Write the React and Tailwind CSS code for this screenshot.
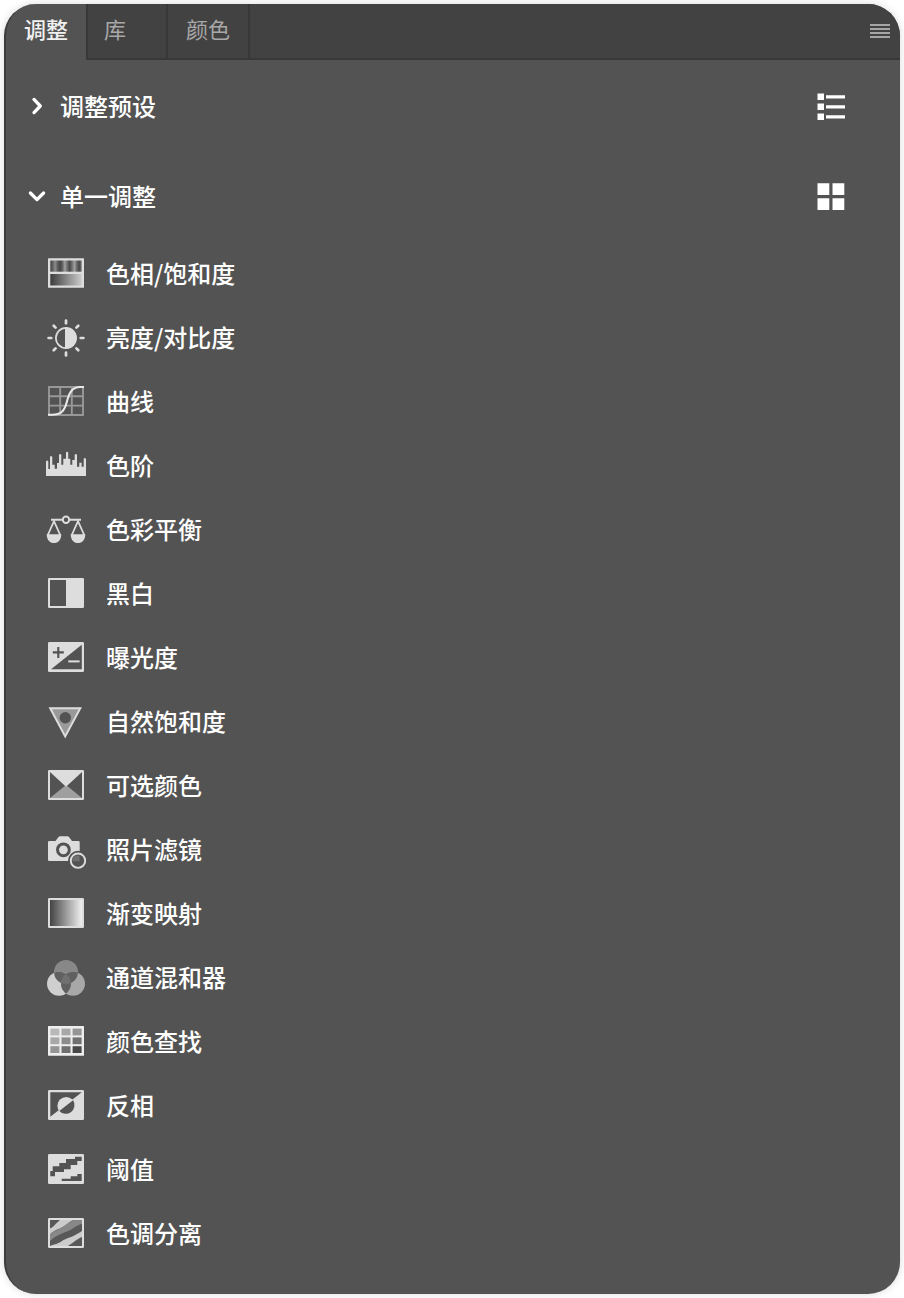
import React from "react";

const L = "#dddddd";
const D = "#535353";

function Icon({ children }) {
  return (
    <svg className="h-10 w-10 shrink-0" viewBox="0 0 40 40" fill="none">
      {children}
    </svg>
  );
}

function Frame({ fill = "none", stroke = L }) {
  return <rect x="3" y="6" width="34" height="28" rx="0.3" fill={fill} stroke={stroke} strokeWidth="2" />;
}

const hueTop = ["#454545", "#606060", "#8c8c8c", "#606060", "#454545", "#606060", "#a0a0a0", "#707070", "#484848", "#707070", "#a0a0a0", "#686868", "#484848", "#787878"];

const Hue = () => (
  <Icon>
    <defs>
      <linearGradient id="hueTop">
        {hueTop.map((c, i) => (
          <stop key={i} offset={i / (hueTop.length - 1)} stopColor={c} />
        ))}
      </linearGradient>
      <linearGradient id="hueBottom">
        <stop offset="0" stopColor="#3c3c3c" />
        <stop offset="1" stopColor="#cccccc" />
      </linearGradient>
    </defs>
    <rect x="2" y="5.2" width="36" height="29.6" rx="0.5" fill={L} />
    <rect x="4.3" y="7.5" width="31.4" height="11.2" fill="url(#hueTop)" />
    <rect x="4.3" y="21" width="31.4" height="11.5" fill="url(#hueBottom)" />
  </Icon>
);

const Brightness = () => (
  <Icon>
    <circle cx="20" cy="21" r="10.1" stroke={L} strokeWidth="1.7" />
    <path d="M19 10.5H20a10.5 10.5 0 0 1 0 21H19Z" fill={L} />
    {[0, 45, 90, 135, 180, 225, 270, 315].map((a) => (
      <path key={a} d="M20 3.6v2.7" stroke={L} strokeWidth="2.7" strokeLinecap="round" transform={`rotate(${a} 20 21)`} />
    ))}
  </Icon>
);

const Curves = () => (
  <Icon>
    <path d="M3 6H37V34H3ZM14.2 6V34M25.8 6V34M3 15.3H37M3 24.6H37" stroke="#989898" strokeWidth="1.9" />
    <path d="M2 33.7H6C15 33.7 18.5 30 20.8 21S26 6 34 6H38" stroke="#e8e8e8" strokeWidth="2.1" />
  </Icon>
);

const Levels = () => (
  <Icon>
    <path
      fill={L}
      d="M0 31V16.5Q1.1 14.5 2.3 16.5V24H4V12Q5.1 10 6.3 12V19.7H8.7V23.7H11V18H13V9.8Q14.1 8 15.3 9.8V19.7H17.3V13.7H20V7.6Q21.1 5.8 22.2 7.6V13.7H24.3V19.7H26.3V15H28.7V9.8Q29.8 8 31 9.8V21.7H33.3V17.7H35.6V21.7H37.7V13.8Q38.8 12 40 13.8V31Z"
    />
  </Icon>
);

const Balance = () => (
  <Icon>
    <path d="M5 10.8H16.5M23.5 10.8H35" stroke={L} strokeWidth="2" />
    <circle cx="20" cy="10.8" r="3.2" stroke={L} strokeWidth="2" />
    <path d="M1.8 26L8 12.2L14.2 26M25.8 26L32 12.2L38.2 26" stroke={L} strokeWidth="1.8" />
    <path d="M0.7 25.2H15.3C15.3 31 12.2 34 8 34S0.7 31 0.7 25.2ZM24.7 25.2H39.3C39.3 31 36.2 34 32 34S24.7 31 24.7 25.2Z" fill={L} />
  </Icon>
);

const BlackWhite = () => (
  <Icon>
    <Frame />
    <rect x="20" y="6" width="17" height="28" fill={L} />
  </Icon>
);

const Exposure = () => (
  <Icon>
    <Frame fill={L} />
    <path d="M5 32.2H35.8V7.7Z" fill={D} />
    <path d="M6.8 15.4H17.8M12.3 9.9V20.9" stroke={D} strokeWidth="2.1" />
    <path d="M22.3 24.4H33.6" stroke={L} strokeWidth="2" />
  </Icon>
);

const Vibrance = () => (
  <Icon>
    <path d="M4.2 7.3H34.3L19.2 35.4Z" fill="#999999" stroke={L} strokeWidth="2" />
    <circle cx="19.3" cy="16.8" r="5.7" fill={D} />
  </Icon>
);

const Selective = () => (
  <Icon>
    <path d="M4 33L20 20L36 33Z" fill="#9f9f9f" />
    <path d="M4 7H36L20 21.7Z" fill={L} />
    <Frame />
  </Icon>
);

const PhotoFilter = () => (
  <Icon>
    <path d="M3.2 12H9.5L12.3 8.2Q13 7.3 14 7.3H21.5Q22.5 7.3 23.2 8.2L26 12H32.5Q33.7 12 33.7 13.2V32H3.2Q2 32 2 30.8V13.2Q2 12 3.2 12Z" fill={L} />
    <circle cx="17.4" cy="20.8" r="7.4" fill={D} />
    <circle cx="17.4" cy="20.8" r="4.4" fill={L} />
    <circle cx="32" cy="31.7" r="10" fill={D} />
    <circle cx="32" cy="31.7" r="7.2" stroke={L} strokeWidth="1.9" />
    <path d="M26.5 30.7Q27.5 26.4 32 26.4H33.6V32.2H26.5Z" fill="#707070" />
  </Icon>
);

const GradientMap = () => (
  <Icon>
    <defs>
      <linearGradient id="mapFill">
        <stop offset="0" stopColor="#444444" />
        <stop offset="1" stopColor="#f0f0f0" />
      </linearGradient>
    </defs>
    <rect x="4" y="7" width="32" height="26" fill="url(#mapFill)" />
    <Frame />
  </Icon>
);

const ChannelMixer = () => (
  <Icon>
    <defs>
      <clipPath id="mixTop"><circle cx="20" cy="15" r="12" /></clipPath>
      <clipPath id="mixLeft"><circle cx="13" cy="26.8" r="12" /></clipPath>
    </defs>
    <circle cx="20" cy="15" r="12" fill="#888888" />
    <circle cx="13" cy="26.8" r="12" fill="#cfcfcf" />
    <circle cx="27" cy="26.8" r="12" fill="#a8a8a8" />
    <g clipPath="url(#mixTop)">
      <circle cx="13" cy="26.8" r="12" fill="#606060" />
      <circle cx="27" cy="26.8" r="12" fill="#606060" />
    </g>
    <g clipPath="url(#mixLeft)">
      <circle cx="27" cy="26.8" r="12" fill="#606060" />
      <g clipPath="url(#mixTop)">
        <circle cx="27" cy="26.8" r="12" fill="#707070" />
      </g>
    </g>
  </Icon>
);

const swatches = ["#b8b8b8", "#a8a8a8", "#959595", "#a8a8a8", "#8c8c8c", "#707070", "#959595", "#707070", "#484848"];

const Lookup = () => (
  <Icon>
    <rect x="2" y="5" width="36" height="29.7" rx="0.5" fill="#eeeeee" />
    {swatches.map((c, i) => (
      <rect key={i} x={4.4 + (i % 3) * 11.1} y={7.6 + Math.floor(i / 3) * 8.8} width="9" height="6.8" fill={c} />
    ))}
  </Icon>
);

const Invert = () => (
  <Icon>
    <Frame fill={L} />
    <path d="M4.3 7.2H35.8L4.3 31.8Z" fill={D} />
    <circle cx="20.2" cy="20.7" r="8.8" fill={L} />
    <path d="M13.3 26.1L27.1 15.3A8.8 8.8 0 0 1 13.3 26.1Z" fill={D} />
  </Icon>
);

const Threshold = () => (
  <Icon>
    <Frame fill={L} />
    <path
      fill={D}
      d="M4.3 22H6.7V17.3H13.3V14H20V10H29V7.7H35.7V12H31.3V16H24.7V20.3H18V23H9V27.3H4.3ZM15.7 29.7H24.7V27.3H31.3V25H35.7V32H15.7Z"
    />
  </Icon>
);

const Posterize = () => (
  <Icon>
    <rect x="3" y="6" width="34" height="28" fill="#585858" />
    <path d="M4 15.5C8 14 10 10 14 7H28C23 8 20 13 15 15S7 18 4 21.5Z" fill="#cccccc" />
    <path d="M4 21.5C7 18 11 17.5 15 15S23 9 28 7H36V11C30 12 26 17 21 18.5S9 23 4 28Z" fill="#888888" />
    <path d="M4 33C9 31 12 31 16 28S26 25 36 18V24C31 26 28 29 22 33Z" fill="#cccccc" />
    <Frame />
  </Icon>
);

const adjustments = [
  ["色相/饱和度", Hue],
  ["亮度/对比度", Brightness],
  ["曲线", Curves],
  ["色阶", Levels],
  ["色彩平衡", Balance],
  ["黑白", BlackWhite],
  ["曝光度", Exposure],
  ["自然饱和度", Vibrance],
  ["可选颜色", Selective],
  ["照片滤镜", PhotoFilter],
  ["渐变映射", GradientMap],
  ["通道混和器", ChannelMixer],
  ["颜色查找", Lookup],
  ["反相", Invert],
  ["阈值", Threshold],
  ["色调分离", Posterize],
];

function TabBar() {
  return (
    <div className="flex h-14 shrink-0 text-[22px] leading-[48px]">
      <div className="w-20 pl-[18px] font-medium text-[#f0f0f0]">调整</div>
      <div className="flex flex-1 border-b-2 border-l-2 border-[#383838] bg-[#424242] text-[#a8a8a8]">
        <div className="w-20 border-r-2 border-[#383838] pl-4">库</div>
        <div className="w-[82px] border-r-2 border-[#383838] pl-[18px]">颜色</div>
        <svg className="mt-5 mr-2.5 ml-auto h-3.5 w-5" viewBox="0 0 20 14" fill="#a5a5a5">
          <path d="M0 0H20V2H0ZM0 4H20V6H0ZM0 8H20V10H0ZM0 12H20V14H0Z" />
        </svg>
      </div>
    </div>
  );
}

function Section({ title, open, children }) {
  return (
    <div className="flex h-[90px] items-center pr-[55px] pl-[21px]">
      <svg className="h-5 w-5" viewBox="0 0 20 20" fill="none" stroke="#ffffff" strokeWidth="3.3" strokeLinecap="round" strokeLinejoin="round">
        <path d={open ? "M3.4 7L10 13.6L16.6 7" : "M7 3.4L13.3 10L7 16.6"} />
      </svg>
      <div className="ml-[13px] flex-1">{title}</div>
      <svg className="h-7 w-7" viewBox="0 0 28 28" fill="#ffffff">
        {children}
      </svg>
    </div>
  );
}

export default function App() {
  return (
    <div className="h-[1298px] w-[904px] bg-white p-1 font-['Noto_Sans_CJK_SC',sans-serif]">
      <div className="flex h-[1290px] flex-col overflow-hidden rounded-[32px] border-l-2 border-[#3d3d3d] bg-[#535353] shadow-[0_0_8px_rgba(0,0,0,0.15)]">
        <TabBar />
        <div className="pt-px text-2xl font-medium text-white">
          <Section title="调整预设">
            <path d="M0.5 1.5H7V8H0.5ZM0.5 11.5H7V18H0.5ZM0.5 21.5H7V28H0.5ZM9 3.3H28V6.5H9ZM9 13.3H28V16.5H9ZM9 23.3H28V26.5H9Z" />
          </Section>
          <Section title="单一调整" open>
            <path d="M0.5 1.2H12.3V13H0.5ZM15.5 1.2H27.3V13H15.5ZM0.5 16.2H12.3V28H0.5ZM15.5 16.2H27.3V28H15.5Z" />
          </Section>
          <ul>
            {adjustments.map(([label, Glyph]) => (
              <li key={label} className="flex h-16 items-center gap-5 pl-10">
                <Glyph />
                <span>{label}</span>
              </li>
            ))}
          </ul>
        </div>
      </div>
    </div>
  );
}
